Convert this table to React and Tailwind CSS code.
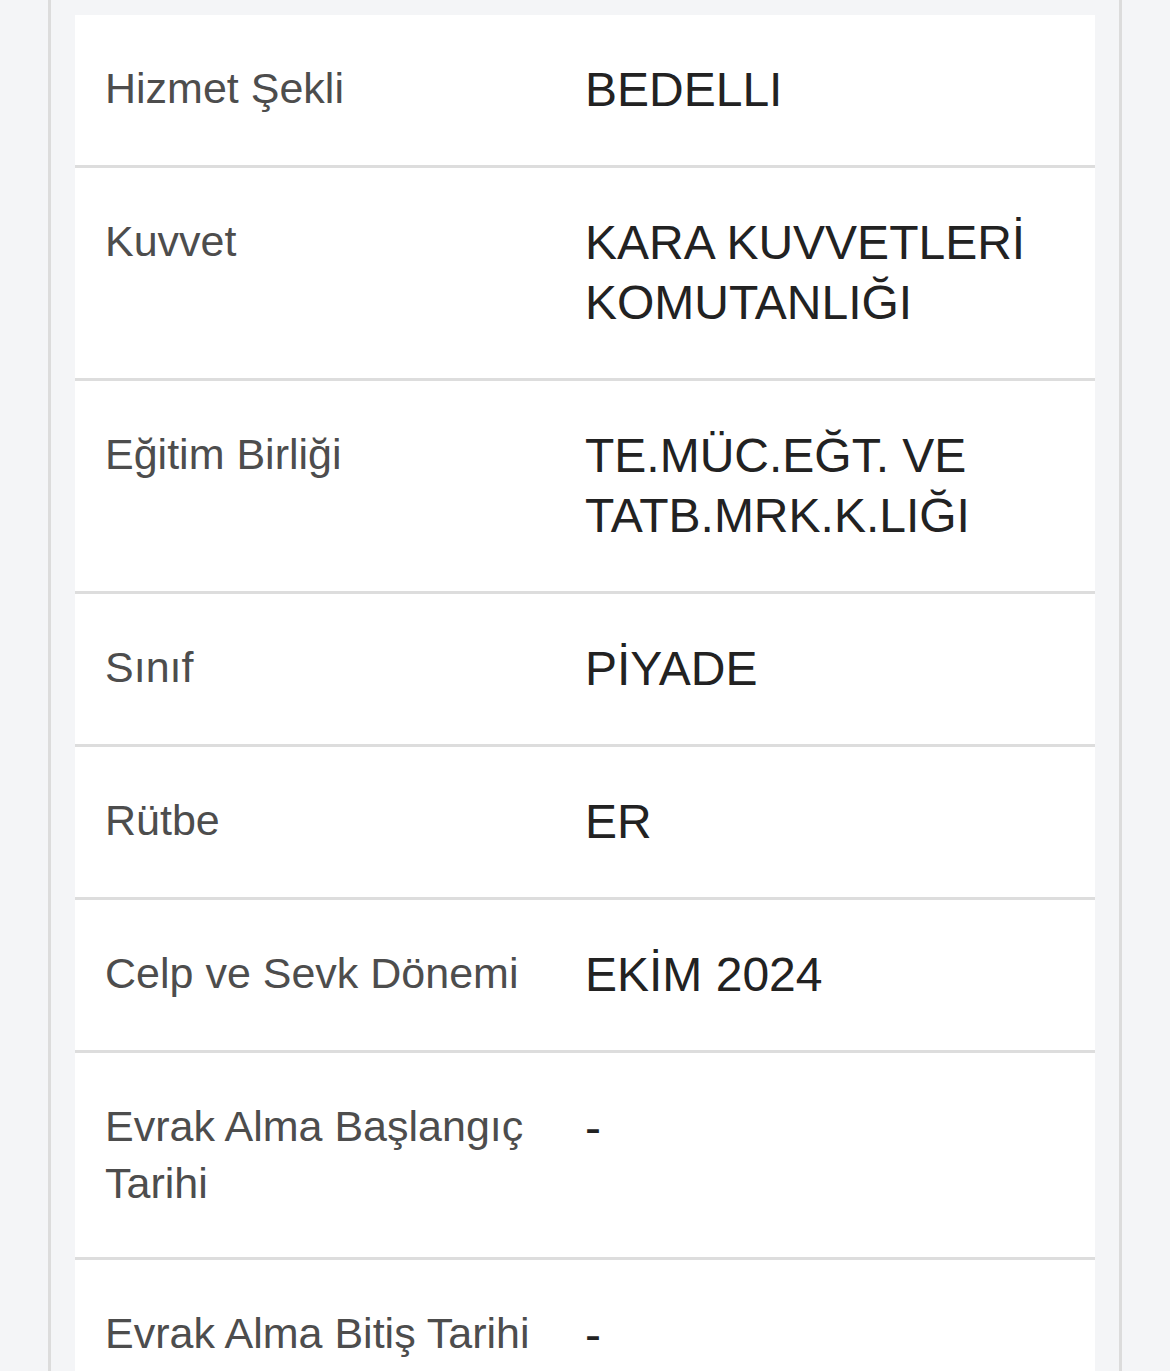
// Military service detail sheet: label / value rows on a white card.

const ROWS = [
  { label: 'Hizmet Şekli', value: 'BEDELLI' },
  { label: 'Kuvvet', value: 'KARA KUVVETLERİ KOMUTANLIĞI' },
  { label: 'Eğitim Birliği', value: 'TE.MÜC.EĞT. VE TATB.MRK.K.LIĞI' },
  { label: 'Sınıf', value: 'PİYADE' },
  { label: 'Rütbe', value: 'ER' },
  { label: 'Celp ve Sevk Dönemi', value: 'EKİM 2024' },
  { label: 'Evrak Alma Başlangıç Tarihi', value: '-' },
  { label: 'Evrak Alma Bitiş Tarihi', value: '-' },
];

export default function App() {
  return (
    <div className="min-h-screen bg-[#f4f5f7] font-['Liberation_Sans',Arial,sans-serif]">
      <div className="mx-[48px] min-h-screen border-x-[3px] border-[#dcdcdc] px-[24px] pt-[15px]">
        <div className="bg-white">
          {ROWS.map((row) => (
            <DetailRow key={row.label} label={row.label} value={row.value} />
          ))}
        </div>
      </div>
    </div>
  );
}

function DetailRow({ label, value }) {
  return (
    <div className="grid grid-cols-[450px_1fr] gap-[30px] border-b-[3px] border-[#dddddd] pl-[30px] pr-[30px] py-[45px] last:border-b-0">
      <div className="text-[43px] leading-[57px] text-[#4d4d4d]">{label}</div>
      <div className="text-[48px] leading-[60px] text-[#222222]">{value}</div>
    </div>
  );
}
